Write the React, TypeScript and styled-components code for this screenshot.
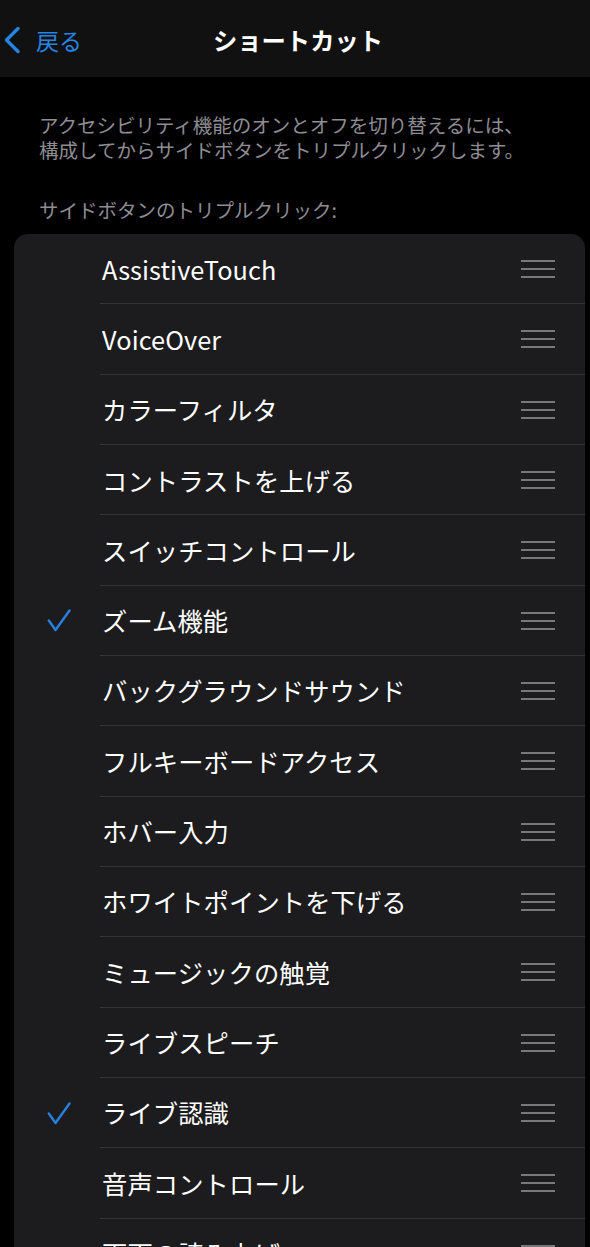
import React from "react";
import styled, { createGlobalStyle } from "styled-components";

const Global = createGlobalStyle`
  html, body {
    margin: 0;
    padding: 0;
    background: #000;
  }
  body {
    font-family: "Noto Sans CJK JP", "Noto Sans", sans-serif;
    -webkit-font-smoothing: antialiased;
  }
`;

const Screen = styled.div`
  width: 590px;
  height: 1247px;
  overflow: hidden;
  background: #000;
  display: flex;
  flex-direction: column;
`;

const NavBar = styled.header`
  height: 77px;
  flex-shrink: 0;
  background: #111112;
  display: grid;
  grid-template-columns: 1fr auto 1fr;
  align-items: center;
  padding-top: 3px;
  box-sizing: border-box;
`;

const BackButton = styled.div`
  display: flex;
  align-items: center;
  gap: 15px;
  padding-left: 3px;
  color: #2684e2;
  font-size: 23px;
  line-height: 1;
`;

const Title = styled.h1`
  margin: 0 0 0 6px;
  color: #fff;
  font-size: 24.3px;
  font-weight: 700;
  line-height: 1;
`;

const Content = styled.main`
  display: flex;
  flex-direction: column;
  padding: 35px 5px 0 14px;
`;

const Description = styled.p`
  margin: 0 0 0 25px;
  color: #8d8d92;
  font-size: 19.5px;
  line-height: 25px;
  white-space: nowrap;
`;

const SectionLabel = styled.div`
  margin: 35px 0 0 25px;
  color: #8d8d92;
  font-size: 19.5px;
  line-height: 25px;
`;

const Card = styled.div`
  margin-top: 12px;
  background: #1c1c1e;
  border-radius: 14px;
  overflow: hidden;
`;

const Row = styled.div<{ $last?: boolean }>`
  position: relative;
  height: 70.33px;
  display: grid;
  grid-template-columns: 88px 1fr 64px;
  align-items: center;
  &::after {
    content: "";
    display: ${(p) => (p.$last ? "none" : "block")};
    position: absolute;
    left: 86px;
    right: 0;
    bottom: 0;
    height: 1px;
    background: #353538;
  }
`;

const CheckCell = styled.div`
  display: flex;
  justify-content: flex-start;
  padding-left: 33px;
  align-items: center;
`;

const Label = styled.span`
  color: #fff;
  font-size: 25.3px;
  line-height: 1;
  white-space: nowrap;
  letter-spacing: 0.1px;
`;

const Handle = styled.div`
  display: flex;
  flex-direction: column;
  gap: 6px;
  width: 34px;
  & > span {
    display: block;
    height: 2px;
    background: #77777c;
  }
`;

const Chevron = () => (
  <svg width="18" height="28" viewBox="0 0 18 28" fill="none">
    <path d="M15 2.5 L3.5 14 L15 25.5" stroke="#2684e2" strokeWidth="3.4" strokeLinecap="round" strokeLinejoin="round" />
  </svg>
);

const Check = () => (
  <svg width="24" height="23" viewBox="0 0 24 23" fill="none">
    <path d="M1.8 11.5 L8.5 21 L22.5 1.5" stroke="#2681de" strokeWidth="2.4" strokeLinecap="round" strokeLinejoin="round" />
  </svg>
);

const items: { label: string; checked?: boolean }[] = [
  { label: "AssistiveTouch" },
  { label: "VoiceOver" },
  { label: "カラーフィルタ" },
  { label: "コントラストを上げる" },
  { label: "スイッチコントロール" },
  { label: "ズーム機能", checked: true },
  { label: "バックグラウンドサウンド" },
  { label: "フルキーボードアクセス" },
  { label: "ホバー入力" },
  { label: "ホワイトポイントを下げる" },
  { label: "ミュージックの触覚" },
  { label: "ライブスピーチ" },
  { label: "ライブ認識", checked: true },
  { label: "音声コントロール" },
  { label: "画面の読み上げ" },
];

export default function App() {
  return (
    <>
      <Global />
      <Screen>
        <NavBar>
          <BackButton>
            <Chevron />
            <span>戻る</span>
          </BackButton>
          <Title>ショートカット</Title>
          <div />
        </NavBar>
        <Content>
          <Description>
            アクセシビリティ機能のオンとオフを切り替えるには、
            <br />
            構成してからサイドボタンをトリプルクリックします。
          </Description>
          <SectionLabel>サイドボタンのトリプルクリック:</SectionLabel>
          <Card>
            {items.map((it, i) => (
              <Row key={it.label} $last={i === items.length - 1}>
                <CheckCell>{it.checked ? <Check /> : null}</CheckCell>
                <Label>{it.label}</Label>
                <Handle>
                  <span />
                  <span />
                  <span />
                </Handle>
              </Row>
            ))}
          </Card>
        </Content>
      </Screen>
    </>
  );
}
